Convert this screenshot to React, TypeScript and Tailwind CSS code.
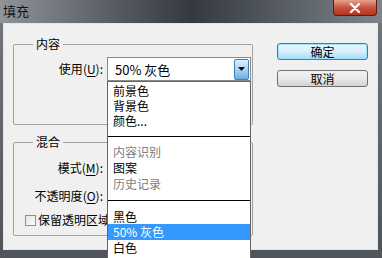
import React from "react";

const font = { fontFamily: '"Noto Sans CJK SC", "Noto Sans", sans-serif' };

type Item = { label: string; h: string; kind?: "normal" | "disabled" | "active" | "sep" };

const items: Item[] = [
  { label: "前景色", h: "h-[15px]" },
  { label: "背景色", h: "h-[15px]" },
  { label: "颜色...", h: "h-[15px]" },
  { label: "", h: "h-[16px]", kind: "sep" },
  { label: "内容识别", h: "h-[16px]", kind: "disabled" },
  { label: "图案", h: "h-[16px]" },
  { label: "历史记录", h: "h-[16px]", kind: "disabled" },
  { label: "", h: "h-[17px]", kind: "sep" },
  { label: "黑色", h: "h-[15px]" },
  { label: "50% 灰色", h: "h-[16px]", kind: "active" },
  { label: "白色", h: "h-[15px]" },
  { label: "", h: "h-[15px]" },
];

const DropList = () => (
  <div className="absolute left-[107px] top-[81px] w-[144px] h-[190px] bg-white border border-[#646464] pt-[1px]">
    {items.map((it, i) =>
      it.kind === "sep" ? (
        <div key={i} className={`${it.h} flex items-center`}>
          <div className="w-full h-px bg-black" />
        </div>
      ) : (
        <div
          key={i}
          className={`${it.h} flex items-center overflow-hidden pl-[5px] text-[12px] leading-[14px] ${
            it.kind === "active"
              ? "bg-[#3399ff] text-white"
              : it.kind === "disabled"
              ? "text-[#7d7d7d]"
              : "text-black"
          }`}
        >
          {it.label}
        </div>
      )
    )}
  </div>
);

const Hotkey = ({ pre, k }: { pre: string; k: string }) => (
  <span>
    {pre}(<span className="underline underline-offset-2">{k}</span>):
  </span>
);

export default function App() {
  return (
    <div
      className="relative w-[382px] h-[258px] overflow-hidden flex flex-col bg-[#5d6368]"
      style={font}
    >
      {/* title bar */}
      <div className="h-[23px] flex items-start justify-between bg-gradient-to-r from-[#8f9499] via-[#343a40] to-[#7f858b]">
        <span className="pl-[3px] pt-[2px] text-[13px] leading-[18px] text-[#101418]">填充</span>
        <div className="mr-[5px] w-[44px] h-[16px] rounded-b-[4px] border border-t-0 border-[#5a1d14] bg-gradient-to-b from-[#e7a293] via-[#c9513d] to-[#b5331f] flex items-center justify-center">
          <svg width="12" height="10" viewBox="0 0 12 10">
            <path d="M2 1 L10 9 M10 1 L2 9" stroke="white" strokeWidth="2.4" strokeLinecap="round" />
          </svg>
        </div>
      </div>

      {/* frame + client */}
      <div className="flex-1 flex pl-[3px] pr-[4px] pb-[8px] bg-gradient-to-b from-[#6f757b] to-[#4e5459]">
        <div className="flex-1 flex bg-[#f0f0f0] border border-[#e6e6e6]">
          <div className="flex flex-col pl-[9px] pt-[13px] gap-[10px]">
            <fieldset className="w-[240px] h-[88px] border border-[#a2a2a2] rounded-[2px]">
              <legend className="ml-[19px] px-[3px] text-[12px] leading-[14px] text-black">内容</legend>
              <div className="flex items-center mt-[6px]">
                <div className="w-[89px] text-right text-[12px] leading-[14px] text-black">
                  <Hotkey pre="使用" k="U" />
                </div>
                <div className="ml-[4px] w-[144px] h-[24px] bg-white border border-[#8a8a8a] flex items-center justify-between">
                  <span className="pl-[7px] text-[13px] leading-[15px] text-black">50% 灰色</span>
                  <div className="w-[15px] h-[21px] mr-[1px] rounded-[2px] border border-[#3c7fb1] bg-gradient-to-b from-[#dcefff] via-[#a9d4f5] to-[#6aaee0] flex items-center justify-center">
                    <svg width="7" height="4" viewBox="0 0 7 4">
                      <path d="M0 0 H7 L3.5 4 Z" fill="#111" />
                    </svg>
                  </div>
                </div>
              </div>
            </fieldset>

            <fieldset className="w-[240px] h-[101px] border border-[#a2a2a2] rounded-[2px]">
              <legend className="ml-[19px] px-[3px] text-[12px] leading-[14px] text-black">混合</legend>
              <div className="mt-[11px] h-[16px] flex items-center">
                <div className="w-[89px] text-right text-[12px] leading-[14px] text-black">
                  <Hotkey pre="模式" k="M" />
                </div>
              </div>
              <div className="mt-[12px] h-[16px] flex items-center">
                <div className="w-[89px] text-right text-[12px] leading-[14px] text-black">
                  <Hotkey pre="不透明度" k="O" />
                </div>
              </div>
              <div className="mt-[8px] h-[16px] flex items-center pl-[11px] gap-[2px]">
                <div className="w-[11px] h-[11px] border border-[#8e8f8f] bg-gradient-to-br from-[#e6e6e6] to-[#fbfbfb]" />
                <span className="text-[12px] leading-[14px] text-black">保留透明区域</span>
              </div>
            </fieldset>
          </div>

          <div className="flex flex-col pl-[24px] pt-[19px] gap-[10px]">
            <button className="w-[91px] h-[17px] rounded-[3px] border border-[#3c7fb1] bg-gradient-to-b from-[#eaf6fd] via-[#d9f0fc] to-[#a7d9f5] shadow-[inset_0_0_0_1px_#9fe0ff] text-[12px] leading-[14px] text-black">
              确定
            </button>
            <button className="w-[91px] h-[17px] rounded-[3px] border border-[#707070] bg-gradient-to-b from-[#f2f2f2] via-[#e8e8e8] to-[#d2d2d2] text-[12px] leading-[14px] text-black">
              取消
            </button>
          </div>
        </div>
      </div>

      <DropList />
    </div>
  );
}
